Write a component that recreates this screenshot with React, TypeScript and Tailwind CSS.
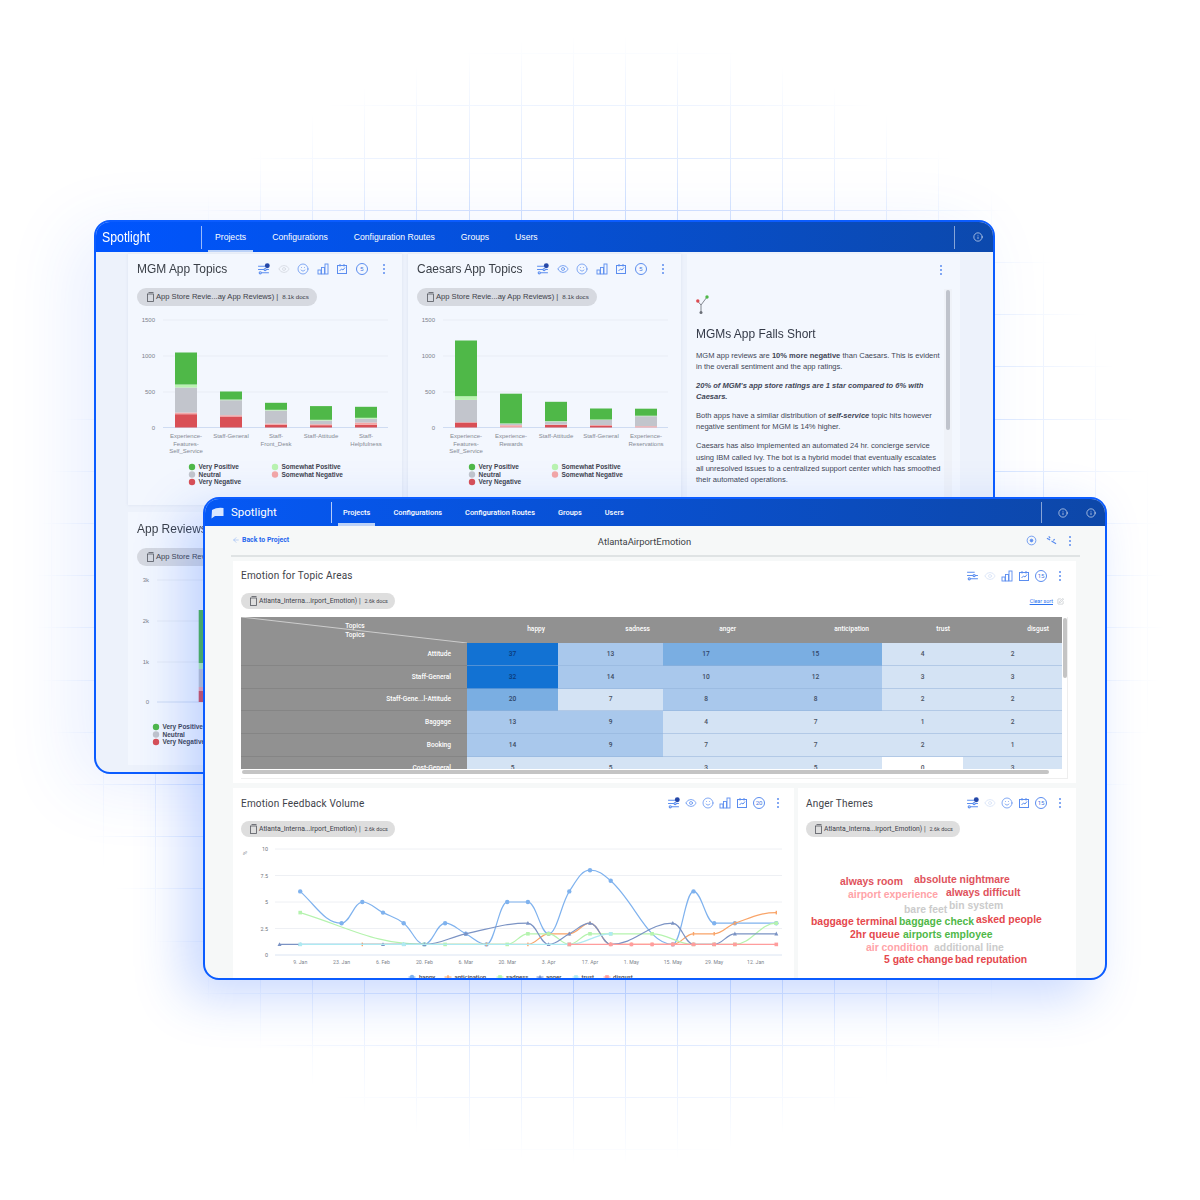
import { ArrowLeft, Eye, Info, Smile, SquarePen } from "lucide-react";

type Pt = [number, number];

const BLUE = "#5b8def";

/* ---------- little icons ---------- */

function Sliders({ dot = true }: { dot?: boolean }) {
  return (
    <svg width="13" height="13" viewBox="0 0 24 24" fill="none" stroke={BLUE} strokeWidth="2">
      <path d="M2 6h14M2 12h20M6 18h16" />
      <circle cx="15" cy="12" r="2" fill="#fff" />
      <circle cx="6" cy="18" r="2" fill="#fff" />
      {dot && <circle cx="19" cy="5" r="4.5" fill="#2447a8" stroke="none" />}
    </svg>
  );
}

function Bars() {
  return (
    <svg width="12" height="12" viewBox="0 0 24 24" fill="none" stroke={BLUE} strokeWidth="1.8">
      <rect x="2" y="14" width="6" height="8" />
      <rect x="9" y="9" width="6" height="13" />
      <rect x="16" y="2" width="6" height="20" />
    </svg>
  );
}

function Board() {
  return (
    <svg width="12" height="12" viewBox="0 0 24 24" fill="none" stroke={BLUE} strokeWidth="2">
      <rect x="3" y="5" width="18" height="16" />
      <path d="M8 2v5M16 2v5M7 16l4-4 3 2 4-5" />
    </svg>
  );
}

function Kebab({ color = BLUE }: { color?: string }) {
  return (
    <svg width="4" height="12" viewBox="0 0 4 12" fill={color}>
      <circle cx="2" cy="2" r="1" />
      <circle cx="2" cy="6" r="1" />
      <circle cx="2" cy="10" r="1" />
    </svg>
  );
}

function Num({ n }: { n: string }) {
  return (
    <span className="flex h-[12px] w-[12px] items-center justify-center rounded-full border border-[#5b8def] text-[6px] leading-none text-[#3f74e0]">
      {n}
    </span>
  );
}

function Doc() {
  return (
    <svg width="9" height="10" viewBox="0 0 18 20" fill="none" stroke="#55585f" strokeWidth="1.6">
      <rect x="3" y="4" width="12" height="15" />
      <path d="M5 1h10" />
    </svg>
  );
}

function Chip({ name, docs, wide }: { name: string; docs: string; wide?: boolean }) {
  if (wide) {
    return (
      <div className="flex h-[18px] w-[180px] items-center rounded-full bg-[#d6d9e0] pl-[9px] text-[7.6px] text-[#3d4149]">
        <Doc />
        <span className="ml-[1px] whitespace-nowrap">{name} |</span>
        <span className="ml-[4px] whitespace-nowrap text-[6.2px]">{docs}</span>
      </div>
    );
  }
  return (
    <div className="flex h-[16px] w-[154px] items-center rounded-full bg-[#dedede] pl-[8px] text-[6.8px] text-[#3d4149]">
      <Doc />
      <span className="ml-[1px] whitespace-nowrap">{name} |</span>
      <span className="ml-[4px] whitespace-nowrap text-[5.4px]">{docs}</span>
    </div>
  );
}

/* ---------- stacked bar charts ---------- */

type Topic = { label: string[]; seg: number[] };

const SEG = ["#4fb848", "#b9f3b0", "#c2c5cc", "#f4a6a6", "#d94f55"];

const mgm: Topic[] = [
  { label: ["Experience-", "Features-", "Self_Service"], seg: [32, 3, 25, 1.7, 13.3] },
  { label: ["Staff-General"], seg: [8, 0.7, 15, 1.3, 11] },
  { label: ["Staff-", "Front_Desk"], seg: [7, 0.7, 13, 1.3, 2.7] },
  { label: ["Staff-Attitude"], seg: [13.7, 0.7, 3.7, 1, 2.3] },
  { label: ["Staff-", "Helpfulness"], seg: [11, 1, 3.7, 2.3, 2.7] },
];

const caesars: Topic[] = [
  { label: ["Experience-", "Features-", "Self_Service"], seg: [55.7, 3.7, 22.3, 0.3, 5] },
  { label: ["Experience-", "Rewards"], seg: [29.7, 0.3, 1.5, 2.3, 0] },
  { label: ["Staff-Attitude"], seg: [19.3, 0.4, 3, 0.5, 2.5] },
  { label: ["Staff-General"], seg: [11, 0.5, 5, 0.5, 2] },
  { label: ["Experience-", "Reservations"], seg: [7, 0.5, 10, 1.3, 0] },
];

function TopicChart({ data }: { data: Topic[] }) {
  return (
    <svg width="274" height="178" className="-ml-[9px] mt-[6px] block">
      {[
        ["1500", 8],
        ["1000", 44],
        ["500", 80],
      ].map(([t, y]) => (
        <g key={t}>
          <line x1="35" x2="260" y1={y} y2={y} stroke="#e9edf5" />
          <text x="27" y={Number(y) + 2} textAnchor="end" fontSize="6" fill="#7d828c">
            {t}
          </text>
        </g>
      ))}
      <line x1="35" x2="260" y1="115.5" y2="115.5" stroke="#cfdcf2" />
      <text x="27" y="117.5" textAnchor="end" fontSize="6" fill="#7d828c">
        0
      </text>
      {data.map((d, i) => {
        const x = 47 + i * 45;
        let y = 115.5;
        return (
          <g key={i}>
            {[...d.seg].reverse().map((h, k) => {
              y -= h;
              return <rect key={k} x={x} y={y} width="22" height={h} fill={SEG[4 - k]} />;
            })}
            {d.label.map((l, n) => (
              <text key={n} x={x + 11} y={126 + n * 7.5} textAnchor="middle" fontSize="6" fill="#858a94">
                {l}
              </text>
            ))}
          </g>
        );
      })}
      <Legend x={64} y={155} c="#4fb848" t="Very Positive" />
      <Legend x={64} y={162.5} c="#c2c5cc" t="Neutral" />
      <Legend x={64} y={170} c="#d94f55" t="Very Negative" />
      <Legend x={147} y={155} c="#b9f3b0" t="Somewhat Positive" />
      <Legend x={147} y={162.5} c="#f4a6a6" t="Somewhat Negative" />
    </svg>
  );
}

function Legend({ x, y, c, t }: { x: number; y: number; c: string; t: string }) {
  return (
    <g>
      <circle cx={x} cy={y} r="3.2" fill={c} />
      <text x={x + 6.5} y={y + 2.2} fontSize="6.5" fontWeight="700" fill="#3f4450">
        {t}
      </text>
    </g>
  );
}

const TITLE = "origin-left scale-x-[0.92] whitespace-nowrap text-[13px] text-[#3a3f47]";

function TopicCard({
  title,
  data,
  eyeOn,
}: {
  title: string;
  data: Topic[];
  eyeOn?: boolean;
}) {
  return (
    <div className="h-[251px] bg-[#f3f7fe] pl-[9px] shadow-[0_0_3px_rgba(150,165,200,0.2)]">
      <div className="flex h-[30px] items-center pr-[16.5px]">
        <h3 className={TITLE}>{title}</h3>
        <div className="ml-auto flex items-center gap-[7.6px]">
          <Sliders />
          <Eye size={12} strokeWidth={1.5} color={eyeOn ? BLUE : "#d3d7df"} />
          <Smile size={12} strokeWidth={1.5} color={BLUE} />
          <Bars />
          <Board />
          <Num n="5" />
          <span className="ml-[6px]">
            <Kebab />
          </span>
        </div>
      </div>
      <div className="mt-[4px]">
        <Chip wide name="App Store Revie...ay App Reviews)" docs="8.1k docs" />
      </div>
      <TopicChart data={data} />
    </div>
  );
}

function InsightCard() {
  return (
    <div className="relative h-[251px] overflow-hidden bg-[#f3f7fe] pl-[9px] text-[7.55px] leading-[11.3px] text-[#3f4656]">
      <div className="flex h-[31px] items-center justify-end pr-[17px]">
        <Kebab />
      </div>
      <svg width="16" height="20" viewBox="0 0 16 20" className="mt-[10px] block">
        <path d="M5 10 L1.5 6 M5 10 L11 2 M5 10 V17" stroke="#777c85" strokeWidth="0.9" fill="none" />
        <circle cx="1.8" cy="6" r="1.7" fill="#dd4b50" />
        <circle cx="11" cy="2" r="1.7" fill="#4fb848" />
        <circle cx="5" cy="17.5" r="1.5" fill="#6b7078" />
      </svg>
      <h3 className="mt-[11px] origin-left scale-x-[0.92] whitespace-nowrap text-[13px] leading-[16px] text-[#343a48]">
        MGMs App Falls Short
      </h3>
      <p className="mt-[7.6px] w-[247px]">
        MGM app reviews are <b>10% more negative</b> than Caesars. This is evident in the overall
        sentiment and the app ratings.
      </p>
      <p className="mt-[7.7px] w-[240px] font-bold italic">
        20% of MGM's app store ratings are 1 star compared to 6% with Caesars.
      </p>
      <p className="mt-[7.7px] w-[244px]">
        Both apps have a similar distribution of <b><i>self-service</i></b> topic hits however
        negative sentiment for MGM is 14% higher.
      </p>
      <p className="mt-[7.7px] w-[248px]">
        Caesars has also implemented an automated 24 hr. concierge service using IBM called Ivy. The
        bot is a hybrid model that eventually escalates all unresolved issues to a centralized
        support center which has smoothed their automated operations.
      </p>
      <div className="absolute right-[8px] top-[35px] h-[216px] w-[8px] bg-[#eff2f8]">
        <div className="mx-auto mt-[1px] h-[140px] w-[4px] rounded-full bg-[#bfc3cc]" />
      </div>
    </div>
  );
}

function ReviewsCard() {
  return (
    <div className="h-[253px] bg-[#f3f7fe] pl-[9px]">
      <h3 className={`pt-[10px] leading-[14px] ${TITLE}`}>App Reviews by Source</h3>
      <div className="mt-[12px]">
        <Chip wide name="App Store Revie...ay App Reviews)" docs="8.1k docs" />
      </div>
      <svg width="264" height="190" className="-ml-[9px] mt-[3px] block">
        {[
          ["3k", 11],
          ["2k", 52],
          ["1k", 93],
        ].map(([t, y]) => (
          <g key={t}>
            <line x1="29" x2="264" y1={y} y2={y} stroke="#e6ebf4" />
            <text x="21" y={Number(y) + 2} textAnchor="end" fontSize="6" fill="#7d828c">
              {t}
            </text>
          </g>
        ))}
        <line x1="29" x2="264" y1="133" y2="133" stroke="#cfdcf2" />
        <text x="21" y="135" textAnchor="end" fontSize="6" fill="#7d828c">
          0
        </text>
        <rect x="70.7" y="41" width="22" height="53" fill="#4fb848" />
        <rect x="70.7" y="94" width="22" height="6" fill="#b9f3b0" />
        <rect x="70.7" y="100" width="22" height="18" fill="#c2c5cc" />
        <rect x="70.7" y="118" width="22" height="4" fill="#f4a6a6" />
        <rect x="70.7" y="122" width="22" height="11" fill="#d94f55" />
        <Legend x={28} y={158} c="#4fb848" t="Very Positive" />
        <Legend x={28} y={165.5} c="#c2c5cc" t="Neutral" />
        <Legend x={28} y={173} c="#d94f55" t="Very Negative" />
      </svg>
    </div>
  );
}

/* ---------- heat table ---------- */

const COLS = ["happy", "sadness", "anger", "anticipation", "trust", "disgust"];

const HEAT: { name: string; vals: number[] }[] = [
  { name: "Attitude", vals: [37, 13, 17, 15, 4, 2] },
  { name: "Staff-General", vals: [32, 14, 10, 12, 3, 3] },
  { name: "Staff-Gene...l-Attitude", vals: [20, 7, 8, 8, 2, 2] },
  { name: "Baggage", vals: [13, 9, 4, 7, 1, 2] },
  { name: "Booking", vals: [14, 9, 7, 7, 2, 1] },
  { name: "Cost-General", vals: [5, 5, 3, 5, 0, 3] },
];

function heatClass(v: number) {
  if (v >= 30) return "bg-[#1272d3] text-[#0c3a78]";
  if (v >= 15) return "bg-[#7aaee2] text-[#2f4468]";
  if (v >= 8) return "bg-[#a9c8ec] text-[#3c4a60]";
  if (v >= 1) return "bg-[#d4e3f4] text-[#4a5262]";
  return "bg-white text-[#4a5262]";
}

const GRID = "grid grid-cols-[226px_91px_105px_86px_133px_81px_99px]";

function HeatTable() {
  return (
    <div className="relative mt-[8px] h-[162px] w-[827px] border-b border-r border-[#eeeeee]">
      <div className="h-[152px] w-[821px] overflow-hidden text-[6.6px] font-medium">
        <div className={`${GRID} h-[26px] bg-[#919191] text-white`}>
          <div className="relative flex flex-col items-center pl-[1px] pt-[5px] leading-[9px]">
            <span className="pl-[1px]">Topics</span>
            <span className="pl-[1px]">Topics</span>
            <svg width="226" height="26" className="absolute left-0 top-0">
              <line x1="0" y1="0" x2="226" y2="26" stroke="#dcdcdc" strokeWidth="0.8" />
            </svg>
          </div>
          {COLS.map((c) => (
            <div key={c} className="flex items-center justify-end pr-[13px]">
              {c}
            </div>
          ))}
        </div>
        {HEAT.map((r) => (
          <div key={r.name} className={`${GRID} h-[22.75px]`}>
            <div className="flex items-center justify-end border-b border-[#858585] bg-[#919191] pr-[16px] pt-[2px] text-white">
              {r.name}
            </div>
            {r.vals.map((v, i) => (
              <div
                key={i}
                className={`flex items-center justify-center border-b border-[#8fb0d8]/50 pt-[2px] ${heatClass(v)}`}
              >
                {v}
              </div>
            ))}
          </div>
        ))}
      </div>
      <div className="absolute left-[822px] top-[1px] h-[60px] w-[4px] rounded-full bg-[#c4c4c4]" />
      <div className="ml-[1px] mt-[1px] h-[4px] w-[807px] rounded-full bg-[#c4c4c4]" />
    </div>
  );
}

/* ---------- line chart ---------- */

const X = (i: number) => 46.5 + 20.7 * i;
const Y = (v: number) => 114 - v * 10.6;

function spline(data: Pt[]) {
  const pts = data.map(([i, v]): Pt => [X(i), Y(v)]);
  const slope = (k: number) => {
    if (k === 0) return ((pts[1][1] - pts[0][1]) / (pts[1][0] - pts[0][0])) * 1.2;
    if (k === pts.length - 1) return 0;
    const [a, b, c] = [pts[k - 1], pts[k], pts[k + 1]];
    if ((b[1] - a[1]) * (c[1] - b[1]) <= 0) return 0;
    return (c[1] - a[1]) / (c[0] - a[0]);
  };
  let d = `M${pts[0][0]} ${pts[0][1]}`;
  for (let k = 1; k < pts.length; k++) {
    const [x0, y0] = pts[k - 1];
    const [x1, y1] = pts[k];
    const dx = (x1 - x0) / 2.5;
    d += ` C${x0 + dx} ${y0 + slope(k - 1) * dx} ${x1 - dx} ${y1 - slope(k) * dx} ${x1} ${y1}`;
  }
  return d;
}

type Series = { name: string; color: string; mark: "circle" | "square" | "tri" | "tick"; pts: Pt[] };

const SERIES: Series[] = [
  {
    name: "happy",
    color: "#7fb2ee",
    mark: "circle",
    pts: [[1, 6], [3, 3], [4, 5], [5, 4], [6, 3], [7, 1], [8, 3], [9, 2], [10, 1], [11, 5], [12, 5], [13, 2], [14, 6], [15, 8], [16, 7], [19, 1], [20, 6], [21, 3], [22, 3], [24, 3]],
  },
  {
    name: "anticipation",
    color: "#f9a468",
    mark: "tick",
    pts: [[4, 1], [10, 1], [12, 1], [13, 2], [14, 2], [15, 3], [16, 1], [17, 1], [18, 1], [19, 1], [20, 2], [21, 2], [22, 3], [24, 4]],
  },
  {
    name: "sadness",
    color: "#b5f3ae",
    mark: "square",
    pts: [[1, 4], [7, 1], [8, 1], [11, 1], [12, 2], [13, 2], [14, 1], [15, 2], [16, 2], [18, 2], [20, 1], [21, 1], [22, 1], [24, 3]],
  },
  {
    name: "anger",
    color: "#7b93c4",
    mark: "tri",
    pts: [[0, 1], [1, 1], [5, 1], [6, 1], [7, 1], [9, 2], [12, 3], [13, 1], [14, 2], [15, 3], [16, 1], [19, 3], [20, 1], [21, 1], [22, 2], [24, 2]],
  },
  {
    name: "trust",
    color: "#aeeaf2",
    mark: "square",
    pts: [[1, 1], [6, 1], [14, 1], [16, 2]],
  },
  {
    name: "disgust",
    color: "#ff9d9d",
    mark: "square",
    pts: [[14, 1], [16, 1], [17, 1], [18, 1], [19, 1], [20, 1], [21, 1], [22, 1], [24, 1]],
  },
];

function Marker({ x, y, s }: { x: number; y: number; s: Series }) {
  if (s.mark === "circle") return <circle cx={x} cy={y} r="2.2" fill={s.color} />;
  if (s.mark === "square") return <rect x={x - 1.8} y={y - 1.8} width="3.6" height="3.6" fill={s.color} />;
  if (s.mark === "tri") return <path d={`M${x} ${y - 2.2}L${x + 2} ${y + 1.6}H${x - 2}Z`} fill={s.color} />;
  return <rect x={x - 0.7} y={y - 1.8} width="1.4" height="3.6" fill={s.color} />;
}

const TICKS = ["9. Jan", "23. Jan", "6. Feb", "20. Feb", "6. Mar", "20. Mar", "3. Apr", "17. Apr", "1. May", "15. May", "29. May", "12. Jan"];

const KEY: [string, number, number][] = [
  ["happy", 179, 186],
  ["anticipation", 215, 221.5],
  ["sadness", 267, 273],
  ["anger", 307, 313],
  ["trust", 343, 348.5],
  ["disgust", 374, 380],
];

function VolumeChart() {
  return (
    <svg width="561" height="145" className="mt-[4px] block">
      {[
        ["10", 10],
        ["7.5", 7.5],
        ["5", 5],
        ["2.5", 2.5],
      ].map(([t, v]) => (
        <g key={t}>
          <line x1="42" x2="549" y1={Y(Number(v))} y2={Y(Number(v))} stroke="#eef0f4" />
          <text x="35" y={Y(Number(v)) + 2} textAnchor="end" fontSize="5.4" fill="#70757e">
            {t}
          </text>
        </g>
      ))}
      <line x1="42" x2="549" y1={Y(0)} y2={Y(0)} stroke="#dbe4f2" />
      <text x="35" y={Y(0) + 2} textAnchor="end" fontSize="5.4" fill="#70757e">
        0
      </text>
      <text transform="rotate(-90 14 12)" x="14" y="12" fontSize="6" textAnchor="middle" fill="#8a8f98">
        %
      </text>
      {SERIES.map((s) => (
        <g key={s.name}>
          <path d={spline(s.pts)} fill="none" stroke={s.color} strokeWidth="1.2" />
          {s.pts.map(([i, v]) => (
            <Marker key={i} x={X(i)} y={Y(v)} s={s} />
          ))}
        </g>
      ))}
      {TICKS.map((t, i) => (
        <text key={t} x={X(1 + i * 2)} y="123" textAnchor="middle" fontSize="5.2" fill="#80858e">
          {t}
        </text>
      ))}
      {KEY.map(([name, mx, tx], n) => {
        const s = SERIES[n];
        return (
          <g key={name}>
            <line x1={mx - 3.5} x2={mx + 3.5} y1="136" y2="136" stroke={s.color} />
            <Marker x={mx} y={136} s={s} />
            <text x={tx} y="138" fontSize="6" fontWeight="500" fill="#3c4048">
              {name}
            </text>
          </g>
        );
      })}
    </svg>
  );
}

/* ---------- word cloud, each word has its own place ---------- */

const WORDS = [
  { t: "always room", c: "left-[42px] top-[88px] text-[#e0525c]" },
  { t: "absolute nightmare", c: "left-[116px] top-[86px] text-[#e0525c]" },
  { t: "airport experience", c: "left-[50px] top-[101px] text-[#ffa3a8]" },
  { t: "always difficult", c: "left-[148px] top-[99px] text-[#e0525c]" },
  { t: "bare feet", c: "left-[106px] top-[116px] text-[#cbcbcb]" },
  { t: "bin system", c: "left-[151px] top-[112px] text-[#cbcbcb]" },
  { t: "baggage terminal", c: "left-[13px] top-[128px] text-[#e5484d]" },
  { t: "baggage check", c: "left-[101px] top-[128px] text-[#4fb848]" },
  { t: "asked people", c: "left-[178px] top-[126px] text-[#e5484d]" },
  { t: "2hr queue", c: "left-[52px] top-[141px] text-[#e5484d]" },
  { t: "airports employee", c: "left-[105px] top-[141px] text-[#4fb848]" },
  { t: "air condition", c: "left-[68px] top-[154px] text-[#ffa3a8]" },
  { t: "additional line", c: "left-[136px] top-[154px] text-[#cbcbcb]" },
  { t: "5 gate change", c: "left-[86px] top-[166px] text-[#e5484d]" },
  { t: "bad reputation", c: "left-[157px] top-[166px] text-[#e5484d]" },
];

/* ---------- page ---------- */

const CARD_ICON = "ml-auto flex items-center gap-[5px]";

function FirstWindow() {
  return (
    <section className="absolute left-[94px] top-[220px] flex h-[554px] w-[901px] flex-col overflow-hidden rounded-[16px] border-2 border-[#0b5cff] bg-[#edf2fb] font-['Liberation_Sans',Arial,sans-serif] shadow-[-20px_12px_70px_rgba(37,99,255,0.1)]">
      <header className="flex h-[30px] shrink-0 items-center bg-gradient-to-r from-[#0055ff] to-[#0c49ad] text-white">
        <div className="w-[105px] pl-[6px]">
          <div className="origin-left scale-x-[0.88] text-[14px]">Spotlight</div>
        </div>
        <div className="h-[23px] w-px bg-white/60" />
        <nav className="ml-[13px] flex h-full items-center gap-[26px] text-[8.65px]">
          <span className="relative flex h-full items-center">
            Projects
            <span className="absolute -left-[7px] -right-[7px] bottom-0 h-[2px] bg-[#bcd2f7]" />
          </span>
          <span>Configurations</span>
          <span>Configuration Routes</span>
          <span>Groups</span>
          <span>Users</span>
        </nav>
        <div className="ml-auto h-[23px] w-px bg-white/50" />
        <Info size={10} strokeWidth={1.4} className="ml-[18px] mr-[10px]" />
      </header>
      <div className="grid grid-cols-[274px_273px_273px] gap-x-[6px] gap-y-[7px] pl-[32px] pt-[2px]">
        <TopicCard title="MGM App Topics" data={mgm} />
        <TopicCard title="Caesars App Topics" data={caesars} eyeOn />
        <InsightCard />
        <ReviewsCard />
      </div>
    </section>
  );
}

function SecondWindow() {
  return (
    <section className="absolute left-[203px] top-[497px] flex h-[483px] w-[904px] flex-col overflow-hidden rounded-[16px] border-2 border-[#0b5cff] bg-[#f6f8f8] font-[Roboto,sans-serif] shadow-[-18px_16px_50px_rgba(37,99,255,0.25)]">
      <header className="flex h-[27px] shrink-0 items-center bg-gradient-to-r from-[#0558f5] to-[#0d47a8] text-white">
        <div className="flex w-[126px] items-center pl-[6px] text-[11.5px]">
          <svg width="13" height="12" viewBox="0 0 13 12" fill="#d8e6ff">
            <path d="M1 3 Q6 0 12.5 1 V9 H4 L0.5 11.5 Z" />
          </svg>
          <span className="ml-[7px]">Spotlight</span>
        </div>
        <div className="h-[21px] w-px bg-white/70" />
        <nav className="ml-[11px] flex h-full items-center gap-[23px] text-[7.4px] font-medium">
          <span className="relative flex h-full items-center">
            Projects
            <span className="absolute -left-[5px] -right-[5px] bottom-0 h-[3px] bg-[#bcd2f7]" />
          </span>
          <span>Configurations</span>
          <span>Configuration Routes</span>
          <span>Groups</span>
          <span>Users</span>
        </nav>
        <div className="ml-auto h-[21px] w-px bg-white/50" />
        <Info size={10} strokeWidth={1.4} className="ml-[16px]" />
        <Info size={10} strokeWidth={1.4} className="ml-[18px] mr-[9px]" />
      </header>

      <div className="flex flex-1 flex-col overflow-hidden pl-[26px] pr-[25px]">
        <div className="relative flex h-[31px] shrink-0 items-center border-b-2 border-[#dfe3e4]">
          <a className="flex items-center pl-[1px] text-[6.9px] font-bold text-[#1f66ee]">
            <ArrowLeft size={8} strokeWidth={1.4} color="#7aa7f5" className="mr-[2px]" />
            Back to Project
          </a>
          <span className="absolute left-0 right-[22px] top-[9px] text-center text-[9.4px] text-[#3b3f46]">
            AtlantaAirportEmotion
          </span>
          <div className="ml-auto flex items-center pr-[8px]">
            <svg width="11" height="11" viewBox="0 0 24 24" fill="none" stroke={BLUE} strokeWidth="1.8">
              <circle cx="12" cy="12" r="9.5" />
              <circle cx="12" cy="12" r="3" fill={BLUE} />
            </svg>
            <svg width="11" height="11" viewBox="0 0 24 24" fill="none" stroke={BLUE} strokeWidth="2.6" className="ml-[9px]">
              <path d="M2 7l7 4M12 13l10 6M6 3l3 4M16 12l3-3" />
            </svg>
            <span className="ml-[11px]">
              <Kebab />
            </span>
          </div>
        </div>

        <div className="mx-[2px] mt-[4px] h-[222px] w-[843px] shrink-0 bg-white pl-[8px]">
          <div className="flex h-[29px] items-center pr-[14px]">
            <h3 className="text-[10px] tracking-[0.2px] text-[#3e4249]">Emotion for Topic Areas</h3>
            <div className={CARD_ICON}>
              <Sliders dot={false} />
              <Eye size={12} strokeWidth={1.5} color="#d6e1f7" />
              <Bars />
              <Board />
              <Num n="15" />
              <span className="ml-[6px]">
                <Kebab />
              </span>
            </div>
          </div>
          <div className="mt-[3px] flex items-center pr-[12px]">
            <Chip name="Atlanta_Interna...irport_Emotion)" docs="2.6k docs" />
            <a className="ml-auto text-[5.4px] text-[#2d74f0] underline">Clear sort</a>
            <SquarePen size={7} strokeWidth={1.4} color="#9aa0a8" className="ml-[4px]" />
          </div>
          <HeatTable />
        </div>

        <div className="ml-[2px] mt-[5px] grid flex-1 grid-cols-[561px_278px] gap-x-[4px]">
          <div className="bg-white pl-[8px]">
            <div className="flex h-[30px] items-center pr-[14px]">
              <h3 className="text-[10px] tracking-[0.2px] text-[#3e4249]">Emotion Feedback Volume</h3>
              <div className={CARD_ICON}>
                <Sliders />
                <Eye size={12} strokeWidth={1.5} color={BLUE} />
                <Smile size={12} strokeWidth={1.5} color={BLUE} />
                <Bars />
                <Board />
                <Num n="20" />
                <span className="ml-[6px]">
                  <Kebab />
                </span>
              </div>
            </div>
            <div className="mt-[3px]">
              <Chip name="Atlanta_Interna...irport_Emotion)" docs="2.6k docs" />
            </div>
            <div className="-ml-[8px]">
              <VolumeChart />
            </div>
          </div>
          <div className="relative bg-white pl-[8px]">
            <div className="flex h-[30px] items-center pr-[14px]">
              <h3 className="text-[10px] tracking-[0.2px] text-[#3e4249]">Anger Themes</h3>
              <div className={CARD_ICON}>
                <Sliders />
                <Eye size={12} strokeWidth={1.5} color="#d6e1f7" />
                <Smile size={12} strokeWidth={1.5} color={BLUE} />
                <Board />
                <Num n="15" />
                <span className="ml-[6px]">
                  <Kebab />
                </span>
              </div>
            </div>
            <div className="mt-[3px]">
              <Chip name="Atlanta_Interna...irport_Emotion)" docs="2.6k docs" />
            </div>
            {WORDS.map((w) => (
              <span
                key={w.t}
                className={`absolute whitespace-nowrap font-['Liberation_Sans',Arial,sans-serif] text-[10.4px] font-bold leading-[12px] ${w.c}`}
              >
                {w.t}
              </span>
            ))}
          </div>
        </div>
      </div>
    </section>
  );
}

const V_LINES = Array.from({ length: 23 }, (_, n) => Math.round(-1.3 + n * 52.2) + 0.5);
const H_LINES = Array.from({ length: 23 }, (_, n) => Math.round(1 + n * 52.2) + 0.5);

function Backdrop() {
  return (
    <svg width="1200" height="1200" className="absolute left-0 top-0">
      <defs>
        <radialGradient id="fade" cx="600" cy="600" r="565" gradientUnits="userSpaceOnUse">
          <stop offset="0.5" stopColor="#fff" />
          <stop offset="1" stopColor="#000" />
        </radialGradient>
        <mask id="fadeMask" maskUnits="userSpaceOnUse" x="0" y="0" width="1200" height="1200">
          <rect width="1200" height="1200" fill="url(#fade)" />
        </mask>
      </defs>
      <g mask="url(#fadeMask)" stroke="#b4cefe" strokeWidth="1">
        {V_LINES.map((x) => (
          <line key={x} x1={x} x2={x} y1="0" y2="1200" />
        ))}
        {H_LINES.map((y) => (
          <line key={y} x1="0" x2="1200" y1={y} y2={y} />
        ))}
      </g>
    </svg>
  );
}

export default function App() {
  return (
    <div className="relative h-[1200px] w-[1200px] overflow-hidden bg-white">
      <Backdrop />
      <FirstWindow />
      <SecondWindow />
    </div>
  );
}
